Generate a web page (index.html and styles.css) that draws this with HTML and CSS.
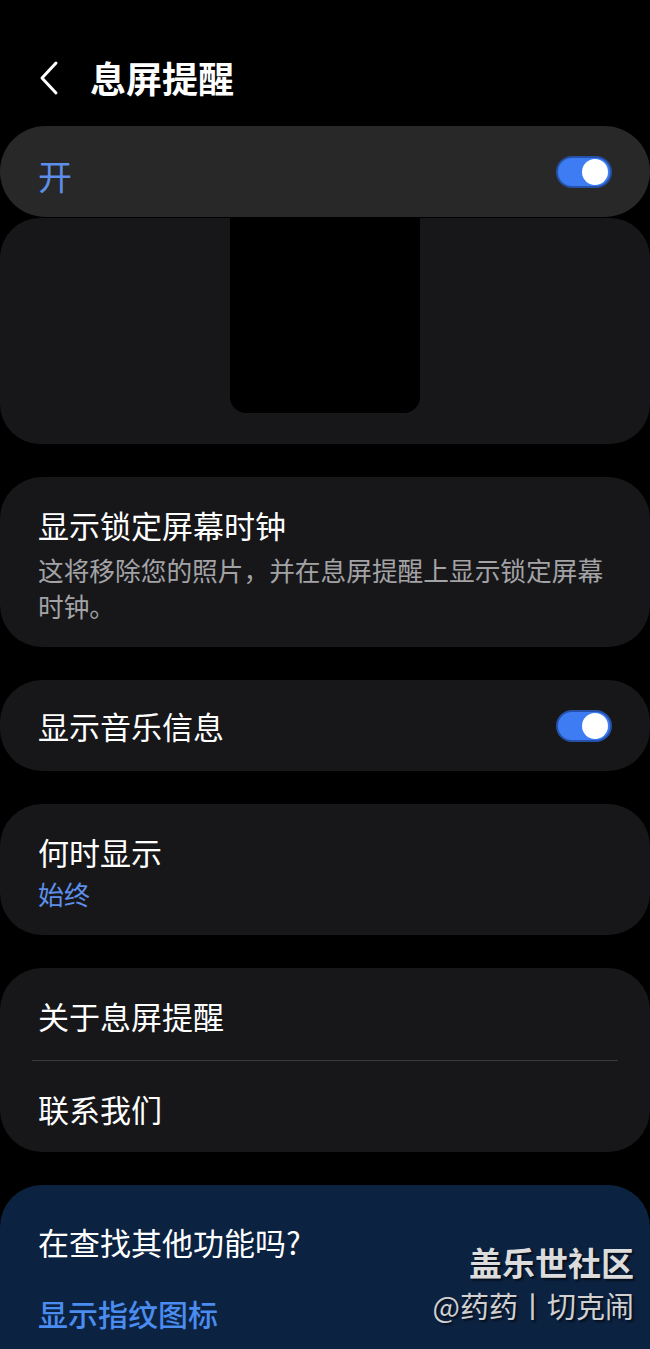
FILE: index.html
```html
<!DOCTYPE html>
<html lang="zh-CN">
<head>
  <meta charset="UTF-8" />
  <meta name="viewport" content="width=device-width, initial-scale=1.0"/>
  <title>息屏提醒</title>
  <link rel="stylesheet" href="styles.css">
</head>
<body>
  <div class="header">
    <svg class="back" width="24" height="36" viewBox="0 0 24 36">
      <polyline points="18,3 4,18 18,33" fill="none" stroke="#fff" stroke-width="3" stroke-linecap="round" stroke-linejoin="round"/>
    </svg>
    <h1>息屏提醒</h1>
  </div>

  <div class="card master">
    <span class="on">开</span>
    <span class="switch"><span class="knob"></span></span>
  </div>

  <div class="card preview">
    <div class="screen"></div>
  </div>

  <div class="card item clock">
    <div class="title">显示锁定屏幕时钟</div>
    <div class="desc">这将移除您的照片，并在息屏提醒上显示锁定屏幕时钟。</div>
  </div>

  <div class="card row">
    <span class="title">显示音乐信息</span>
    <span class="switch"><span class="knob"></span></span>
  </div>

  <div class="card item when">
    <div class="title">何时显示</div>
    <div class="value">始终</div>
  </div>

  <div class="card list">
    <div class="list-row">关于息屏提醒</div>
    <div class="divider"></div>
    <div class="list-row">联系我们</div>
  </div>

  <div class="card suggest">
    <div class="title">在查找其他功能吗?</div>
    <div class="link">显示指纹图标</div>
    <div class="mark">
      <div class="mark-big">盖乐世社区</div>
      <div class="mark-small">@药药丨切克闹</div>
    </div>
  </div>
</body>
</html>
```

FILE: styles.css
```css
* { box-sizing: border-box; }
body {
  margin: 0;
  background: #000;
  color: #fff;
  font-family: "Noto Sans CJK SC", "Noto Sans", sans-serif;
}
.header {
  height: 126px;
  display: flex; align-items: center;
  padding: 30px 0 0 38px;
}
.back { margin-right: 28px; }
.header h1 {
  margin: 0; font-size: 36px; font-weight: bold; line-height: 40px;
  margin-top: -2px;
}
.card {
  background: #17171a;
  border-radius: 42px;
  margin-bottom: 33px;
}
.title { font-size: 31px; line-height: 40px; }
.master {
  height: 91px; background: #282828;
  display: flex; align-items: center; justify-content: space-between;
  padding: 0 38px; margin-bottom: 1px;
  border-radius: 46px;
}
.on { font-size: 34px; color: #5d8fea; line-height: 40px; margin-top: 8px; }
.switch {
  width: 56px; height: 32px; border-radius: 16px;
  background: #3d7cf2; border: 2px solid #2552a8;
  display: flex; align-items: center; justify-content: flex-end;
  padding: 0 2px;
}
.knob {
  width: 26px; height: 26px; border-radius: 50%; background: #fff;
}
.preview {
  height: 226px; border-radius: 40px;
  display: flex; justify-content: center;
}
.screen {
  width: 190px; height: 195px; background: #000;
  border-radius: 0 0 16px 16px;
}
.item { padding: 28px 38px 0; }
.clock { height: 170px; }
.when { height: 131px; }
.desc { font-size: 25.7px; line-height: 36px; color: #a3a3a6; margin-top: 7px; }
.value { font-size: 26px; line-height: 36px; color: #5d8fea; margin-top: 4px; }
.row {
  height: 91px;
  display: flex; align-items: center; justify-content: space-between;
  padding: 0 38px;
}
.list { height: 184px; }
.list-row {
  height: 92px; font-size: 31px;
  display: flex; align-items: center; padding: 2px 38px 0;
}
.list-row:last-child { height: 91px; padding-top: 4px; }
.divider { height: 1px; background: #3a3a3e; margin: 0 32px; }
.suggest {
  position: relative;
  background: #0c2241;
  border-radius: 42px 42px 0 0;
  margin-bottom: 0;
  padding: 37px 38px 20px;
  min-height: 164px;
}
.link { font-size: 30px; line-height: 40px; color: #4a8cf0; margin-top: 31px; font-weight: 500; }
.mark {
  position: absolute; right: 16px; top: 57px;
  text-align: right;
}
.mark-big {
  font-size: 33px; font-weight: bold; line-height: 40px; color: #dcdcdc;
  text-shadow: 2px 2px 2px rgba(0,0,0,0.6);
}
.mark-small {
  font-size: 29px; line-height: 40px; color: #d0d0d0; margin-top: 3px;
  text-shadow: 2px 2px 2px rgba(0,0,0,0.6);
}
```
